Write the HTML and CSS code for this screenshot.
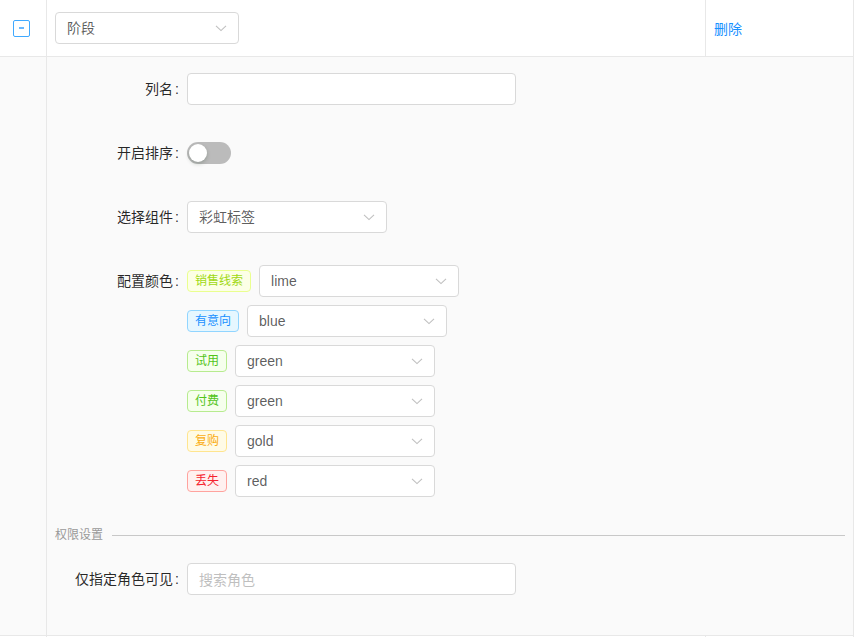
FILE: index.html
```html
<!DOCTYPE html>
<html lang="zh">
<head>
<meta charset="utf-8">
<link rel="stylesheet" href="styles.css">
</head>
<body>
<div class="table">
  <div class="row head-row">
    <div class="cell c-expand"><span class="minus-btn"><span class="minus-bar"></span></span></div>
    <div class="cell c-main">
      <div class="select sel-stage"><span class="sel-val">阶段</span><svg class="arrow" viewBox="0 0 12 12"><path d="M1 3.8 L6 8.6 L11 3.8" /></svg></div>
    </div>
    <div class="cell c-op"><a class="link">删除</a></div>
  </div>
  <div class="row expand-row">
    <div class="cell c-expand"></div>
    <div class="cell c-detail">
      <div class="form-item">
        <label class="label">列名</label>
        <div class="input w329"></div>
      </div>
      <div class="form-item">
        <label class="label">开启排序</label>
        <span class="switch"><span class="handle"></span></span>
      </div>
      <div class="form-item">
        <label class="label">选择组件</label>
        <div class="select w200"><span class="sel-val">彩虹标签</span><svg class="arrow" viewBox="0 0 12 12"><path d="M1 3.8 L6 8.6 L11 3.8" /></svg></div>
      </div>
      <div class="form-item top">
        <label class="label">配置颜色</label>
        <div class="color-list">
          <div class="color-row"><span class="tag lime">销售线索</span><div class="select w200"><span class="sel-val">lime</span><svg class="arrow" viewBox="0 0 12 12"><path d="M1 3.8 L6 8.6 L11 3.8" /></svg></div></div>
          <div class="color-row"><span class="tag blue">有意向</span><div class="select w200"><span class="sel-val">blue</span><svg class="arrow" viewBox="0 0 12 12"><path d="M1 3.8 L6 8.6 L11 3.8" /></svg></div></div>
          <div class="color-row"><span class="tag green">试用</span><div class="select w200"><span class="sel-val">green</span><svg class="arrow" viewBox="0 0 12 12"><path d="M1 3.8 L6 8.6 L11 3.8" /></svg></div></div>
          <div class="color-row"><span class="tag green">付费</span><div class="select w200"><span class="sel-val">green</span><svg class="arrow" viewBox="0 0 12 12"><path d="M1 3.8 L6 8.6 L11 3.8" /></svg></div></div>
          <div class="color-row"><span class="tag gold">复购</span><div class="select w200"><span class="sel-val">gold</span><svg class="arrow" viewBox="0 0 12 12"><path d="M1 3.8 L6 8.6 L11 3.8" /></svg></div></div>
          <div class="color-row"><span class="tag red">丢失</span><div class="select w200"><span class="sel-val">red</span><svg class="arrow" viewBox="0 0 12 12"><path d="M1 3.8 L6 8.6 L11 3.8" /></svg></div></div>
        </div>
      </div>
      <div class="divider"><span class="divider-text">权限设置</span><span class="divider-line"></span></div>
      <div class="form-item last">
        <label class="label">仅指定角色可见</label>
        <div class="input w329"><span class="placeholder">搜索角色</span></div>
      </div>
    </div>
  </div>
  <div class="row tail-row">
    <div class="cell c-expand"></div>
    <div class="cell c-main"></div>
    <div class="cell c-op"></div>
  </div>
</div>
</body>
</html>
```

FILE: styles.css
```css
* { box-sizing: border-box; }
html, body { margin: 0; padding: 0; background: #fff; }
body {
  font-family: "Liberation Sans", "Noto Sans CJK SC", sans-serif;
  font-size: 14px;
  color: rgba(0,0,0,0.65);
  width: 854px;
  height: 637px;
  overflow: hidden;
}
.table { width: 854px; border-right: 1px solid #e8e8e8; }
.row { display: flex; border-bottom: 1px solid #e8e8e8; }
.head-row { height: 57px; background: #fff; }
.expand-row { background: #fafafa; }
.tail-row { height: 1px; background: #fff; border-bottom: none; }
.cell { display: flex; align-items: center; }
.c-expand { width: 47px; flex: none; border-right: 1px solid #e8e8e8; padding-left: 13px; }
.c-main { width: 659px; flex: none; padding: 0 8px; border-right: 1px solid #e8e8e8; }
.c-op { flex: 1; padding: 0 8px; }
.c-detail { flex: 1; display: block; padding: 16px 8px 16px 8px; }

.minus-btn {
  width: 17px; height: 17px;
  border: 1px solid #40a9ff;
  border-radius: 2px;
  background: #fff;
  display: flex; align-items: center; justify-content: center;
}
.minus-bar { width: 5px; height: 2px; background: #69b8ff; }

.link { color: #1890ff; text-decoration: none; font-size: 14px; }

.select {
  height: 32px;
  border: 1px solid #d9d9d9;
  border-radius: 4px;
  background: #fff;
  display: flex; align-items: center;
  padding: 0 11px;
  position: relative;
  color: rgba(0,0,0,0.65);
}
.sel-stage { width: 184px; }
.w200 { width: 200px; }
.w329 { width: 329px; }
.sel-val { flex: 1; line-height: 20px; }
.arrow { width: 12px; height: 12px; flex: none; }
.arrow path { fill: none; stroke: rgba(0,0,0,0.25); stroke-width: 1.1; }

.form-item { display: flex; align-items: center; min-height: 32px; margin-bottom: 32px; }
.form-item.top { align-items: flex-start; }
.form-item.last { margin-bottom: 24px; }
.label {
  width: 132px; flex: none;
  text-align: right;
  color: rgba(0,0,0,0.85);
  line-height: 32px;
  white-space: nowrap;
}
.label::after { content: ":"; margin: 0 8px 0 2px; position: relative; top: -0.5px; }

.input {
  height: 32px;
  border: 1px solid #d9d9d9;
  border-radius: 4px;
  background: #fff;
  padding: 0 11px;
  display: flex; align-items: center;
}
.placeholder { color: #bfbfbf; }

.switch {
  width: 44px; height: 22px;
  border-radius: 11px;
  background: rgba(0,0,0,0.25);
  display: flex; align-items: center;
  padding-left: 2px;
}
.handle {
  width: 18px; height: 18px; border-radius: 50%;
  background: #fff;
  box-shadow: 0 2px 4px 0 rgba(0,35,11,0.2);
}

.color-list { display: flex; flex-direction: column; gap: 8px; }
.color-row { display: flex; align-items: center; gap: 8px; height: 32px; }
.tag {
  height: 22px;
  line-height: 20px;
  padding: 0 7px;
  font-size: 12px;
  border: 1px solid;
  border-radius: 4px;
  white-space: nowrap;
}
.lime { color: #a0d911; background: #fcffe6; border-color: #eaff8f; }
.blue { color: #1890ff; background: #e6f7ff; border-color: #91d5ff; }
.green { color: #52c41a; background: #f6ffed; border-color: #b7eb8f; }
.gold { color: #faad14; background: #fffbe6; border-color: #ffe58f; }
.red { color: #f5222d; background: #fff1f0; border-color: #ffa39e; }

.divider { display: flex; align-items: center; height: 12px; margin-bottom: 22px; }
.divider-text { font-size: 12px; line-height: 12px; color: #999; padding-right: 9px; white-space: nowrap; }
.divider-line { flex: 1; height: 1px; background: #c8c8c8; }
```
